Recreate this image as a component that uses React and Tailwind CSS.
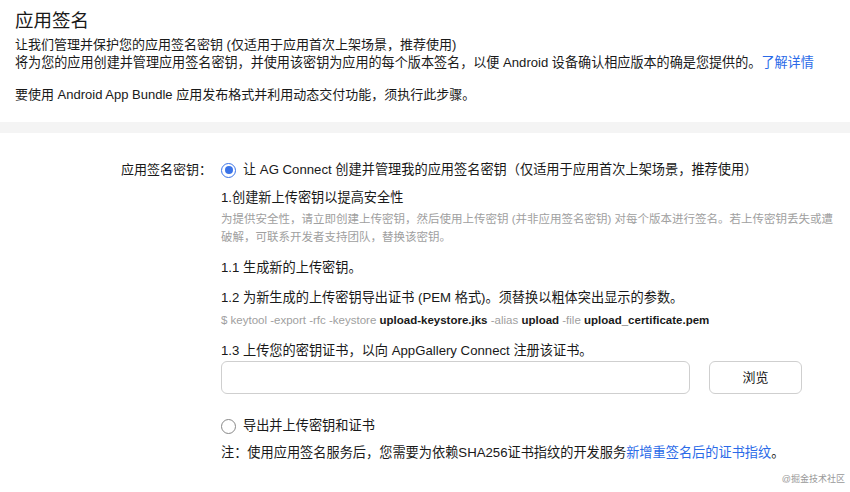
export default function App() {
  return (
    <div className="w-[850px] h-[492px] overflow-hidden bg-white text-[#191919] font-['Liberation_Sans','Noto_Sans_CJK_SC',sans-serif]">
      <div className="px-[15px] pt-[7px] whitespace-nowrap">
        <h1 className="text-[18.5px] leading-[28px] font-normal">应用签名</h1>
        <p className="mt-[1px] text-[13px] leading-[18px]">让我们管理并保护您的应用签名密钥 (仅适用于应用首次上架场景，推荐使用)</p>
        <p className="text-[13.1px] leading-[18px]">
          将为您的应用创建并管理应用签名密钥，并使用该密钥为应用的每个版本签名，以便 Android 设备确认相应版本的确是您提供的。
          <span className="text-[#2a6ae8]">了解详情</span>
        </p>
        <p className="mt-[14px] text-[13px] leading-[18px]">要使用 Android App Bundle 应用发布格式并利用动态交付功能，须执行此步骤。</p>
      </div>

      <div className="mt-[18px] h-[11px] bg-[#f4f4f4]" />

      <div className="flex pt-[27px]">
        <div className="w-[212px] text-right text-[13px] leading-[20px]">应用签名密钥：</div>
        <div className="ml-[9px] flex-1 text-[13.2px]">
          <div className="flex items-center h-[20px]">
            <span className="w-[15px] h-[15px] rounded-full border-[1.5px] border-[#3a73e8] flex items-center justify-center">
              <span className="w-[8px] h-[8px] rounded-full bg-[#3a73e8]" />
            </span>
            <span className="ml-[7px]">让 AG Connect 创建并管理我的应用签名密钥（仅适用于应用首次上架场景，推荐使用）</span>
          </div>

          <p className="mt-[9px] leading-[18px]">1.创建新上传密钥以提高安全性</p>
          <p className="mt-[3px] w-[618px] text-[11.5px] leading-[18px] text-[#a0a0a0]">
            为提供安全性，请立即创建上传密钥，然后使用上传密钥 (并非应用签名密钥) 对每个版本进行签名。若上传密钥丢失或遭破解，可联系开发者支持团队，替换该密钥。
          </p>

          <p className="mt-[13px] leading-[18px]">1.1 生成新的上传密钥。</p>
          <p className="mt-[12px] leading-[18px]">1.2 为新生成的上传密钥导出证书 (PEM 格式)。须替换以粗体突出显示的参数。</p>
          <p className="mt-[4px] text-[11.5px] leading-[18px] text-[#a0a0a0]">
            $ keytool -export -rfc -keystore <b className="text-[#191919]">upload-keystore.jks</b> -alias <b className="text-[#191919]">upload</b> -file <b className="text-[#191919]">upload_certificate.pem</b>
          </p>
          <p className="mt-[13px] leading-[18px]">1.3 上传您的密钥证书，以向 AppGallery Connect 注册该证书。</p>

          <div className="mt-[1px] flex items-center">
            <div className="w-[469px] h-[33px] rounded-[6px] border border-[#cfcfcf]" />
            <button className="ml-[19px] w-[93px] h-[33px] rounded-[6px] border border-[#cfcfcf] text-[13px] bg-white">浏览</button>
          </div>

          <div className="mt-[22px] flex items-center h-[20px]">
            <span className="w-[15px] h-[15px] rounded-full border border-[#888]" />
            <span className="ml-[7px]">导出并上传密钥和证书</span>
          </div>

          <p className="mt-[8px] leading-[18px]">
            注：使用应用签名服务后，您需要为依赖SHA256证书指纹的开发服务<span className="text-[#2a6ae8]">新增重签名后的证书指纹</span>。
          </p>
          <div className="mt-[11px] pr-[5px] text-right text-[9px] leading-[12px] text-[#999]">@掘金技术社区</div>
        </div>
      </div>
    </div>
  );
}
